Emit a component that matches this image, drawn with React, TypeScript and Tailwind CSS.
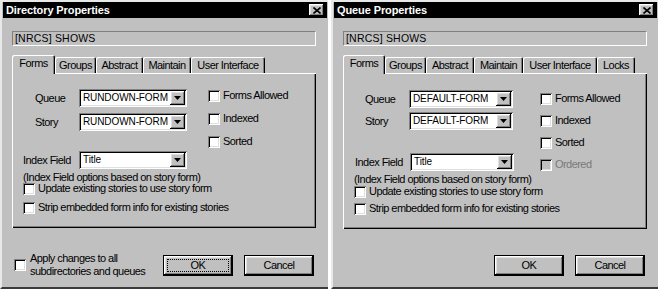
import React from 'react';

const raised =
  'shadow-[inset_-1px_-1px_#000,inset_1px_1px_#fff,inset_-2px_-2px_#808080,inset_2px_2px_#dfdfdf]';
const sunken =
  'shadow-[inset_1px_1px_#808080,inset_-1px_-1px_#fff,inset_2px_2px_#000,inset_-2px_-2px_#dfdfdf]';

type Tab = { label: string; w: string };

function CheckBox({ label, disabled }: { label: string; disabled?: boolean }) {
  return (
    <div className="flex items-center gap-[3px] h-[13px] whitespace-nowrap">
      <span className={`block w-[12px] h-[12px] shrink-0 ${disabled ? 'bg-[#c0c0c0]' : 'bg-white'} ${sunken}`} />
      <span className={disabled ? 'text-[#7a7a7a]' : 'text-black'}>{label}</span>
    </div>
  );
}

function Combo({ value, w }: { value: string; w: string }) {
  return (
    <div className={`${w} h-[18px] bg-white ${sunken} flex items-stretch p-[2px]`}>
      <span className="flex-1 pl-[2px] leading-[14px] text-[10px] tracking-[-0.1px] whitespace-nowrap overflow-hidden">
        {value}
      </span>
      <span className={`w-[15px] shrink-0 bg-[#c0c0c0] ${raised} flex items-center justify-center`}>
        <svg width="7" height="4" viewBox="0 0 7 4">
          <path d="M0 0h7L3.5 4z" fill="#000" />
        </svg>
      </span>
    </div>
  );
}

function Button({ label, focus }: { label: string; focus?: boolean }) {
  return (
    <div className="w-[70px] h-[21px] border border-black">
      <div className={`w-full h-full ${raised} flex items-center justify-center p-[3px]`}>
        <div
          className={`w-full h-full flex items-center justify-center border border-dotted ${
            focus ? 'border-black' : 'border-transparent'
          }`}
        >
          {label}
        </div>
      </div>
    </div>
  );
}

function Dialog({
  title,
  tabs,
  comboA,
  comboW,
  leftW,
  checkGap,
  checkTop,
  checks,
  queueMode,
}: {
  title: string;
  tabs: Tab[];
  comboA: string;
  comboW: string;
  leftW: string;
  checkGap: string;
  checkTop: string;
  checks: { label: string; disabled?: boolean }[];
  queueMode?: boolean;
}) {
  return (
    <div
      className={`h-[289px] bg-[#c0c0c0] border-t-2 border-l-2 border-[#e8e8e8] border-b-2 border-b-[#3a3a3a] flex flex-col ${
        queueMode ? 'w-[327px]' : 'w-[328px]'
      }`}
    >
      {/* title bar */}
      <div className="h-[16px] ml-[1px] mr-[1px] bg-black flex items-center justify-between pl-[3px] pr-[3px]">
        <span className="text-white font-bold text-[11px] tracking-[-0.1px]">{title}</span>
        <span className={`w-[15px] h-[12px] bg-[#c0c0c0] ${raised} flex items-center justify-center`}>
          <svg width="8" height="7" viewBox="0 0 8 7">
            <path d="M0.5 0.5l7 6M7.5 0.5l-7 6" stroke="#000" strokeWidth="1.6" />
          </svg>
        </span>
      </div>

      {/* path field */}
      <div className="ml-[10px] mt-[13px] w-[304px] h-[15px] border border-[#808080] border-r-white border-b-white flex items-center pl-[2px] text-[10.5px] tracking-[0.2px]">
        [NRCS] SHOWS
      </div>

      {/* tabs */}
      <div className="ml-[10px] mt-[9px] h-[18px] flex items-end">
        {tabs.map((t, i) => (
          <div
            key={t.label}
            className={`${t.w} rounded-t-[2px] flex items-center justify-center whitespace-nowrap bg-[#c0c0c0] shadow-[inset_1px_1px_#fff,inset_-1px_0_#000,inset_-2px_0_#808080] ${
              i === 0 ? 'h-[19px] -mb-[1px] relative z-10 pb-[2px]' : 'h-[16px]'
            }`}
          >
            {t.label}
          </div>
        ))}
      </div>

      {/* panel */}
      <div
        className={`ml-[10px] w-[304px] shadow-[inset_1px_1px_#fff,inset_-1px_-1px_#000,inset_-2px_-2px_#808080] flex flex-col ${
          queueMode ? 'h-[156px]' : 'h-[155px]'
        }`}
      >
        <div className={`flex ${queueMode ? 'pt-[17px]' : 'pt-[16px]'}`}>
          <div className={`${leftW} shrink-0 flex flex-col`}>
            <div className={`flex items-center ${queueMode ? 'pl-[22px]' : 'pl-[23px]'}`}>
              <span className="w-[44px]">Queue</span>
              <Combo value={comboA} w={comboW} />
            </div>
            <div className={`flex items-center ${queueMode ? 'pl-[22px] mt-[4px]' : 'pl-[23px] mt-[6px]'}`}>
              <span className="w-[44px]">Story</span>
              <Combo value={comboA} w={comboW} />
            </div>
            <div className={`flex items-center ${queueMode ? 'pl-[12px] mt-[23px]' : 'pl-[11px] mt-[20px]'}`}>
              <span className={`whitespace-nowrap ${queueMode ? 'w-[55px]' : 'w-[56px]'}`}>Index Field</span>
              <Combo value="Title" w={comboW} />
            </div>
          </div>
          <div className={`flex flex-col ${checkGap} ${checkTop}`}>
            {checks.map((c) => (
              <CheckBox key={c.label} label={c.label} disabled={c.disabled} />
            ))}
          </div>
        </div>
        <div className="pl-[11px] leading-[12px] mt-[2px] whitespace-nowrap">
          (Index Field options based on story form)
        </div>
        <div className={`pl-[11px] flex flex-col ${queueMode ? 'mt-[0px] gap-[4px]' : '-mt-[1px] gap-[6px]'}`}>
          <CheckBox label="Update existing stories to use story form" />
          <CheckBox label="Strip embedded form info for existing stories" />
        </div>
      </div>

      {/* bottom */}
      <div className={`flex items-center ${queueMode ? 'mt-[26px]' : 'mt-[24px]'}`}>
        <div className="w-[161px] pl-[12px] flex items-center gap-[4px]">
          {!queueMode && (
            <>
              <span className={`block w-[12px] h-[12px] shrink-0 bg-white ${sunken}`} />
              <span className="leading-[13px] whitespace-nowrap">
                Apply changes to all
                <br />
                subdirectories and queues
              </span>
            </>
          )}
        </div>
        <Button label="OK" focus={!queueMode} />
        <div className="w-[11px]" />
        <Button label="Cancel" />
      </div>
    </div>
  );
}

export default function App() {
  return (
    <div className="w-[658px] h-[289px] bg-white flex gap-[3px] overflow-hidden font-['Liberation_Sans',Arial,sans-serif] text-[11px] tracking-[-0.55px] text-black">
      <Dialog
        title="Directory Properties"
        tabs={[
          { label: 'Forms', w: 'w-[43px]' },
          { label: 'Groups', w: 'w-[41px]' },
          { label: 'Abstract', w: 'w-[47px]' },
          { label: 'Maintain', w: 'w-[48px]' },
          { label: 'User Interface', w: 'w-[74px]' },
        ]}
        comboA="RUNDOWN-FORM"
        comboW="w-[108px]"
        leftW="w-[175px]"
        checkGap="gap-[10px]"
        checkTop="mt-[0px] ml-[21px]"
        checks={[{ label: 'Forms Allowed' }, { label: 'Indexed' }, { label: 'Sorted' }]}
      />
      <Dialog
        title="Queue Properties"
        tabs={[
          { label: 'Forms', w: 'w-[42px]' },
          { label: 'Groups', w: 'w-[41px]' },
          { label: 'Abstract', w: 'w-[48px]' },
          { label: 'Maintain', w: 'w-[49px]' },
          { label: 'User Interface', w: 'w-[74px]' },
          { label: 'Locks', w: 'w-[38px]' },
        ]}
        comboA="DEFAULT-FORM"
        comboW="w-[104px]"
        leftW="w-[171px]"
        checkGap="gap-[9px]"
        checkTop="mt-[2px] ml-[26px]"
        checks={[
          { label: 'Forms Allowed' },
          { label: 'Indexed' },
          { label: 'Sorted' },
          { label: 'Ordered', disabled: true },
        ]}
        queueMode
      />
    </div>
  );
}
